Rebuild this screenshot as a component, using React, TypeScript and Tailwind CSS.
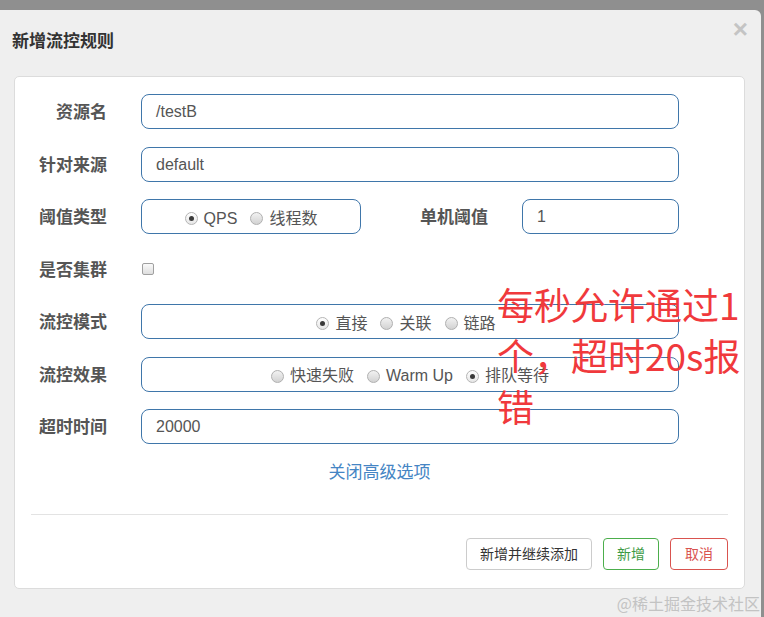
import React from "react";

const FONT = { fontFamily: '"Liberation Sans", "Noto Sans CJK SC", sans-serif' };

function Radio({ checked, label }: { checked?: boolean; label: string }) {
  return (
    <span className="inline-flex items-center">
      <span
        className={
          "w-[13px] h-[13px] rounded-full border flex items-center justify-center " +
          (checked
            ? "border-[#b5b5b5] bg-linear-to-b from-[#ffffff] to-[#e6e6e6]"
            : "border-[#b0b0b0] bg-linear-to-b from-[#f2f2f2] to-[#d2d2d2]")
        }
      >
        {checked && <span className="w-[5px] h-[5px] rounded-full bg-[#3a3a3a]" />}
      </span>
      <span className="ml-[6px]">{label}</span>
    </span>
  );
}

function Label({ children, w = "w-[92px]" }: { children: React.ReactNode; w?: string }) {
  return (
    <div className={w + " shrink-0 h-[35px] text-right text-[17px] font-bold text-[#555] leading-[37px]"}>{children}</div>
  );
}

const boxCls =
  "h-[35px] rounded-[8px] border border-[#3f76aa] bg-white text-[16px] text-[#555] flex items-center";

export default function App() {
  return (
    <div
      className="relative w-[764px] h-[617px] overflow-hidden bg-[#8f8f8f] pt-[10px] pr-[3px] flex flex-col"
      style={FONT}
    >
      <div className="flex-1 bg-[#efefef] rounded-tr-[6px] flex flex-col">
        {/* header */}
        <div className="h-[66px] flex items-start justify-between pl-[12px] pr-[13px]">
          <div className="mt-[21px] text-[17px] font-bold text-[#333] leading-[22px]">新增流控规则</div>
          <div className="mt-[6px] text-[26px] leading-[26px] text-[#c4c4c4] font-bold">×</div>
        </div>

        {/* panel */}
        <div className="ml-[14px] mr-[16px] bg-white border border-[#dcdcdc] rounded-[5px] pt-[17px] pb-[18px]">
          <div className="flex flex-col gap-[17.5px]">
            <div className="flex items-center">
              <Label>资源名</Label>
              <div className={boxCls + " ml-[34px] w-[538px] pl-[14px] pt-[1px]"}>/testB</div>
            </div>
            <div className="flex items-center">
              <Label>针对来源</Label>
              <div className={boxCls + " ml-[34px] w-[538px] pl-[14px] pt-[1px]"}>default</div>
            </div>
            <div className="flex items-center">
              <Label>阈值类型</Label>
              <div className={boxCls + " ml-[34px] w-[220px] justify-center text-[15.5px] gap-[13px] pt-[4px]"}>
                <Radio checked label="QPS" />
                <Radio label="线程数" />
              </div>
              <Label w="w-[127px]">单机阈值</Label>
              <div className={boxCls + " ml-[34px] w-[157px] pl-[14px] pt-[1px]"}>1</div>
            </div>
            <div className="flex items-center h-[35px]">
              <Label>是否集群</Label>
              <span className="ml-[35px] w-[12px] h-[12px] rounded-[2px] border border-[#a0a0a0] bg-linear-to-b from-[#fafafa] to-[#dedede]" />
            </div>
            <div className="flex items-center">
              <Label>流控模式</Label>
              <div className={boxCls + " ml-[34px] w-[538px] justify-center text-[15.5px] gap-[13px] pr-[8px] pt-[4px]"}>
                <Radio checked label="直接" />
                <Radio label="关联" />
                <Radio label="链路" />
              </div>
            </div>
            <div className="flex items-center">
              <Label>流控效果</Label>
              <div className={boxCls + " ml-[34px] w-[538px] justify-center text-[15.5px] gap-[13px] pt-[4px]"}>
                <Radio label="快速失败" />
                <Radio label="Warm Up" />
                <Radio checked label="排队等待" />
              </div>
            </div>
            <div className="flex items-center">
              <Label>超时时间</Label>
              <div className={boxCls + " ml-[34px] w-[538px] pl-[14px] pt-[1px]"}>20000</div>
            </div>
          </div>

          <div className="mt-[17px] text-center text-[17px] leading-[24px] text-[#4585c4]">关闭高级选项</div>

          <div className="mt-[29px] mx-[16px] h-px bg-[#e3e3e3]" />

          <div className="mt-[23px] flex justify-end gap-[11px] pr-[16px]">
            <div className="h-[32px] px-[13px] rounded-[4px] border border-[#cccccc] text-[14px] text-[#333] flex items-center bg-white">
              新增并继续添加
            </div>
            <div className="h-[32px] px-[13px] rounded-[4px] border border-[#4cae4c] text-[14px] text-[#3d9b45] flex items-center bg-white">
              新增
            </div>
            <div className="h-[32px] px-[14px] rounded-[4px] border border-[#d9534f] text-[14px] text-[#d9534f] flex items-center bg-white">
              取消
            </div>
          </div>
        </div>
      </div>

      {/* red annotation overlay */}
      <div
        className="absolute left-[497px] top-[279px] w-[252px] text-[37px] leading-[51px] text-[#f0393c]"
        style={{ fontFamily: '"Noto Sans CJK SC", "Liberation Sans", sans-serif' }}
      >
        每秒允许通过1个，超时20s报错
      </div>

      {/* watermark */}
      <div
        className="absolute right-[4px] bottom-[4px] text-[16px] leading-[20px] text-[#c3c3c3]"
        style={{ fontFamily: '"Noto Sans CJK SC", sans-serif' }}
      >
        @稀土掘金技术社区
      </div>
    </div>
  );
}
